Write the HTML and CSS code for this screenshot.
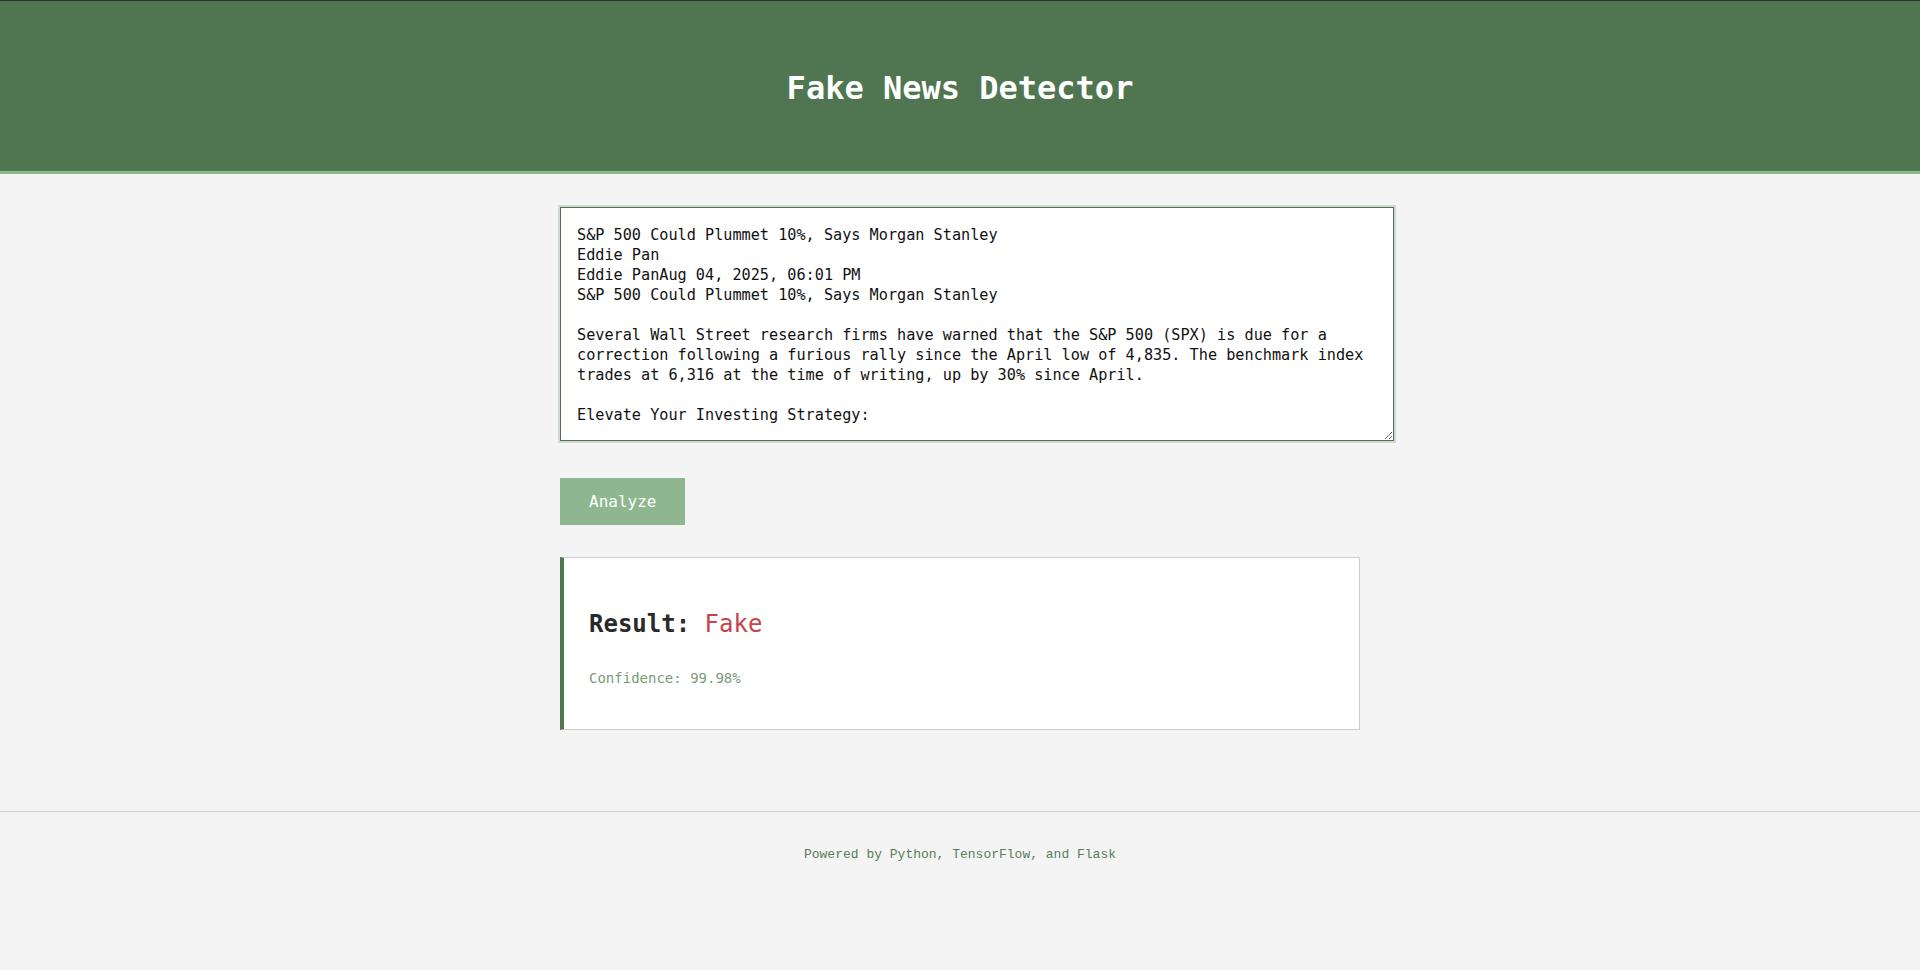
FILE: index.html
```html
<!DOCTYPE html>
<html lang="en">
<head>
<meta charset="utf-8">
<title>Fake News Detector</title>
<link rel="stylesheet" href="styles.css">
</head>
<body>
<header class="site-header">
  <h1 class="site-title">Fake News Detector</h1>
</header>
<main class="container">
  <form class="analyze-form">
    <textarea class="news-input" rows="10" spellcheck="false">S&amp;P 500 Could Plummet 10%, Says Morgan Stanley
Eddie Pan
Eddie PanAug 04, 2025, 06:01 PM
S&amp;P 500 Could Plummet 10%, Says Morgan Stanley

Several Wall Street research firms have warned that the S&amp;P 500 (SPX) is due for a
correction following a furious rally since the April low of 4,835. The benchmark index
trades at 6,316 at the time of writing, up by 30% since April.

Elevate Your Investing Strategy:</textarea>
    <button type="button" class="analyze-btn">Analyze</button>
  </form>
  <section class="result-box">
    <h2 class="result-title">Result: <span class="result-fake">Fake</span></h2>
    <p class="confidence">Confidence: 99.98%</p>
  </section>
</main>
<footer class="site-footer">
  <p class="footer-text">Powered by Python, TensorFlow, and Flask</p>
</footer>
</body>
</html>
```

FILE: styles.css
```css
* {
  box-sizing: border-box;
}

html, body {
  margin: 0;
  padding: 0;
}

body {
  background: #f4f4f4;
  font-family: "DejaVu Sans Mono", "Liberation Mono", monospace;
  color: #2a2a2a;
  border-top: 1px solid #2e2e2e;
}

.site-header {
  background: #4f7551;
  border-bottom: 3px solid #8fb78f;
  height: 173px;
  display: flex;
  align-items: center;
  justify-content: center;
}

.site-title {
  margin: 0;
  color: #ffffff;
  font-size: 32px;
  font-weight: bold;
  line-height: 40px;
  padding-top: 3px;
}

.container {
  width: 800px;
  margin: 33px auto 0;
}

.analyze-form {
  display: flex;
  flex-direction: column;
  align-items: flex-start;
}

.news-input {
  box-sizing: content-box;
  width: 800px;
  height: 200px;
  padding: 17px 16px 15px;
  margin: 0;
  border: 1px solid #4f7551;
  box-shadow: 0 0 0 2px #d0dad0;
  background: #ffffff;
  color: #111111;
  font-family: "DejaVu Sans Mono", "Liberation Mono", monospace;
  font-size: 15.2px;
  line-height: 20px;
  resize: both;
  outline: none;
}

.analyze-btn {
  margin-top: 37px;
  background: #8fb78f;
  color: #ffffff;
  border: none;
  padding: 13px 29px;
  font-family: "DejaVu Sans Mono", "Liberation Mono", monospace;
  font-size: 16px;
  line-height: 21px;
  cursor: pointer;
}

.result-box {
  margin-top: 32px;
  background: #ffffff;
  border: 1px solid #cccccc;
  border-left: 4px solid #4f7551;
  padding: 25px 25px;
  height: 173px;
}

.result-title {
  margin: 25px 0 0;
  font-size: 24px;
  line-height: 32px;
  font-weight: bold;
  color: #2a2a2a;
}

.result-fake {
  color: #c4464a;
  font-weight: normal;
}

.confidence {
  margin: 28px 0 0;
  font-size: 14px;
  line-height: 20px;
  color: #7a9a7a;
}

.site-footer {
  margin-top: 81px;
  border-top: 1px solid #cccccc;
  padding: 34px 0;
  text-align: center;
}

.footer-text {
  margin: 0;
  font-family: "Liberation Mono", "DejaVu Sans Mono", monospace;
  font-size: 13px;
  line-height: 18px;
  color: #5a7a5a;
}
```
